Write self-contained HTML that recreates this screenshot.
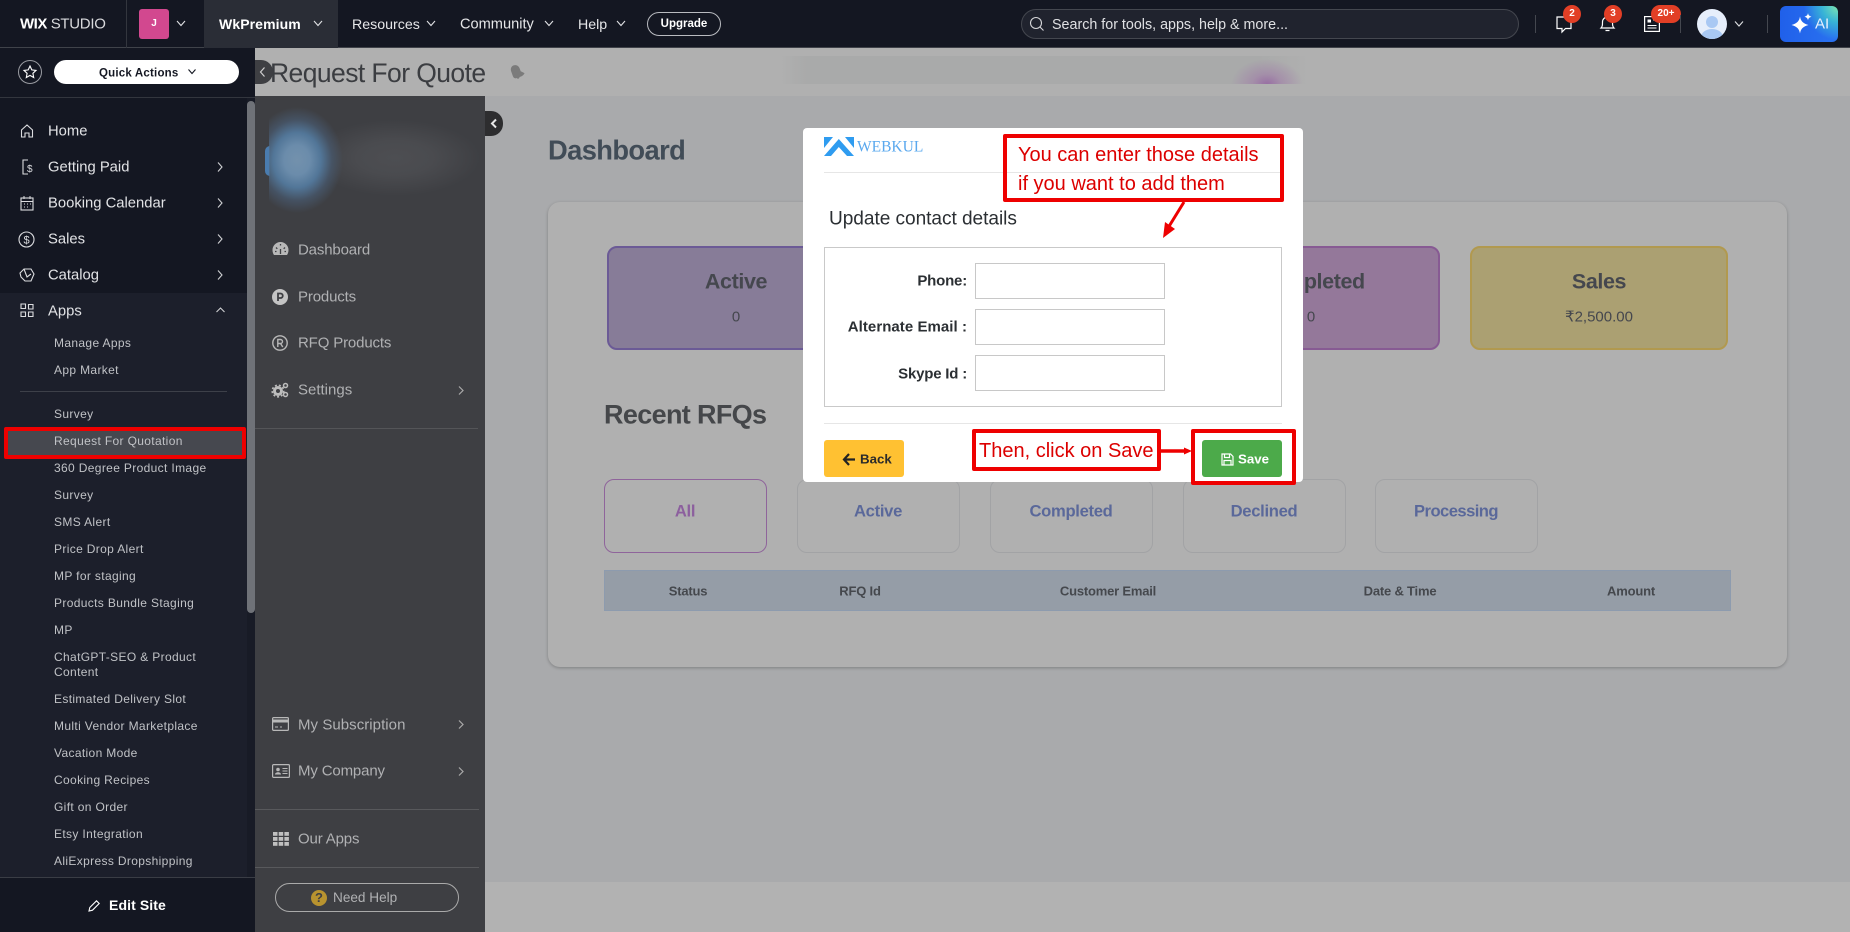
<!DOCTYPE html>
<html><head><meta charset="utf-8"><title>Request For Quote</title>
<style>
html,body{margin:0;padding:0;width:1850px;height:932px;overflow:hidden;background:#a9aaac;font-family:"Liberation Sans",sans-serif}
div,span{box-sizing:border-box}
.a{position:absolute}
.t{position:absolute;white-space:nowrap;line-height:1;transform:translateY(-50%)}
.c{transform:translate(-50%,-50%)}
svg{position:absolute;overflow:visible}
.n{color:#e2e3e6;font-size:14.8px;margin-top:1px}
.s{color:#c0c2c6;font-size:12px;letter-spacing:.35px;left:54px}
.r{color:#b0b1b3;font-size:15px;left:298px;letter-spacing:-.15px}
.w{color:#fff}
.bd{position:absolute;background:#e23f26;border-radius:10px;color:#fff;font-size:10px;font-weight:bold;text-align:center;height:18px;line-height:18px}
.stat{position:absolute;top:246px;height:104px;width:258px;border-radius:10px;border:2px solid}
.tab{position:absolute;top:479px;height:74px;width:163px;border:1px solid #a2a3a5;border-radius:10px}
.tt{font-size:16.6px;font-weight:bold;color:#5a689a;letter-spacing:-.3px;top:512px}
.th{color:#45484d;font-size:13px;font-weight:bold;top:591px;letter-spacing:-.2px}
.lb{color:#2b2f33;font-size:15px;font-weight:bold;right:883px;letter-spacing:-.2px}
.inp{position:absolute;left:975px;width:190px;height:36px;border:1px solid #c8c8c8;background:#fff}
.rb{position:absolute;border:4px solid #ee0000;border-radius:2px}
</style></head><body>

<!-- content area -->
<div class="a" style="left:255px;top:48px;width:1595px;height:48px;background:#b0b0b0"></div>
<div class="a" style="left:485px;top:882px;width:1365px;height:50px;background:#b2b2b2"></div>
<div class="a" style="left:780px;top:56px;width:530px;height:28px;background:linear-gradient(90deg,rgba(168,169,169,0),#a9aaaa 5%,#a9aaaa 90%,rgba(168,169,169,0))"></div>
<div class="a" style="left:1225px;top:58px;width:80px;height:26px;background:radial-gradient(ellipse 36px 25px at 42px 26px,#986fa3 0%,rgba(160,125,168,.6) 40%,rgba(176,160,180,0) 100%)"></div>
<div class="t" style="left:270px;top:73px;font-size:26.5px;color:#3b3d41;letter-spacing:-.58px">Request For Quote</div>
<svg style="left:507px;top:64px" width="18" height="18" viewBox="0 0 18 18"><path d="M9 1c3 0 5 2 5 5v3l3 3c-2 2-4 2-6 2-1 2-3 1-3 0-2 0-3-1-3-3V6c0-3 2-5 4-5z" fill="#7b7b7b" transform="rotate(-20 9 9)"/></svg>

<!-- dashboard card -->
<div class="t" style="left:548px;top:150px;font-size:27.3px;font-weight:bold;color:#414c57;letter-spacing:-.6px">Dashboard</div>
<div class="a" style="left:548px;top:202px;width:1239px;height:465px;background:#b0b0b0;border-radius:12px;box-shadow:0 1px 3px rgba(0,0,0,.25)"></div>
<div class="stat" style="left:607px;background:#877c98;border-color:#6b5a96"></div>
<div class="t c" style="left:736px;top:282px;font-size:21.5px;font-weight:bold;color:#45474e;letter-spacing:-.4px">Active</div>
<div class="t c" style="left:736px;top:317px;font-size:15px;color:#45474e">0</div>
<div class="stat" style="left:1182px;background:#94789a;border-color:#875a93"></div>
<div class="t c" style="left:1311px;top:282px;font-size:21.5px;font-weight:bold;color:#45474e;letter-spacing:-.4px">Completed</div>
<div class="t c" style="left:1311px;top:317px;font-size:15px;color:#45474e">0</div>
<div class="stat" style="left:1470px;background:#aba072;border-color:#b1994f"></div>
<div class="t c" style="left:1599px;top:282px;font-size:21.5px;font-weight:bold;color:#45474e;letter-spacing:-.4px">Sales</div>
<div class="t c" style="left:1599px;top:317px;font-size:15px;color:#45474e;font-family:'Liberation Sans','DejaVu Sans',sans-serif">₹2,500.00</div>

<div class="t" style="left:604px;top:415px;font-size:27px;font-weight:bold;color:#45474a;letter-spacing:-.65px">Recent RFQs</div>
<div class="tab" style="left:604px;border-color:#8f649b"></div>
<div class="t c tt" style="left:685px;color:#8c5f9e">All</div>
<div class="tab" style="left:797px"></div>
<div class="t c tt" style="left:878px">Active</div>
<div class="tab" style="left:990px"></div>
<div class="t c tt" style="left:1071px">Completed</div>
<div class="tab" style="left:1183px"></div>
<div class="t c tt" style="left:1264px">Declined</div>
<div class="tab" style="left:1375px"></div>
<div class="t c tt" style="left:1456px;letter-spacing:-.55px">Processing</div>
<div class="a" style="left:604px;top:570px;width:1127px;height:41px;background:#959da7;border:1px solid #8d9bae"></div>
<div class="t c th" style="left:688px">Status</div>
<div class="t c th" style="left:860px">RFQ Id</div>
<div class="t c th" style="left:1108px">Customer Email</div>
<div class="t c th" style="left:1400px">Date &amp; Time</div>
<div class="t c th" style="left:1631px">Amount</div>

<!-- rfq sidebar -->
<div class="a" style="left:255px;top:96px;width:230px;height:836px;background:#3e3f43"></div>
<div class="a" style="left:310px;top:110px;width:175px;height:100px;background:radial-gradient(ellipse 85px 38px at 85px 48px,#4d4e52 0%,#4a4b4f 45%,rgba(62,63,67,0) 100%)"></div>
<div class="a" style="left:265px;top:146px;width:5px;height:30px;background:#4a7caf;border-radius:15px 0 0 15px/15px 0 0 15px"></div>
<div class="a" style="left:269px;top:106px;width:86px;height:108px;background:radial-gradient(ellipse 46px 53px at 28px 54px,#7391ac 0%,#6b8cab 28%,#527698 52%,rgba(72,90,112,.7) 76%,rgba(62,63,67,0) 100%)"></div>
<div class="a" style="left:485px;top:111px;width:18px;height:25px;background:#2d2d2f;border-radius:0 12px 12px 0"></div>
<svg style="left:489px;top:118px" width="10" height="11" viewBox="0 0 10 11"><path d="M7 1.500 3 5.500 7 9.500" fill="none" stroke="#e8e8e8" stroke-width="2"/></svg>
<div class="a" style="left:255px;top:60px;width:18px;height:24px;background:#3e3f43;border-radius:0 12px 12px 0"></div>
<svg style="left:258px;top:66px" width="10" height="12" viewBox="0 0 10 12"><path d="M6.500 1.500 2.500 6 6.500 10.500" fill="none" stroke="#d0d0d0" stroke-width="1.200"/></svg>

<svg style="left:272px;top:241px" width="17" height="16" viewBox="0 0 17 16"><path d="M8.500 1A8 8 0 0 0 .5 9c0 2 .6 3.700 1.500 5h13c.9-1.300 1.500-3 1.500-5a8 8 0 0 0-8-8z" fill="#b8b8b8"/><path d="M8.500 13V8M4 6.500l1.300 1.300M13 6.500l-1.300 1.300M3 10.500h1.500M14 10.500h-1.500M8.500 3v1.500" stroke="#3e3f43" stroke-width="1.300"/></svg>
<div class="t r" style="top:250px">Dashboard</div>
<svg style="left:272px;top:289px" width="16" height="16" viewBox="0 0 16 16"><circle cx="8" cy="8" r="8" fill="#c4c4c4"/><path d="M6 12V4.500h2.500a2.100 2.100 0 0 1 0 4.500H6" fill="none" stroke="#3e3f43" stroke-width="1.800"/></svg>
<div class="t r" style="top:297px">Products</div>
<svg style="left:272px;top:335px" width="16" height="16" viewBox="0 0 16 16"><circle cx="8" cy="8" r="7.200" fill="none" stroke="#b8b8b8" stroke-width="1.400"/><path d="M5.800 12V4.500h2.700a2 2 0 0 1 0 4H5.800M8.500 8.500 10.800 12" fill="none" stroke="#b8b8b8" stroke-width="1.400"/></svg>
<div class="t r" style="top:343px">RFQ Products</div>
<svg style="left:272px;top:382px" width="17" height="16" viewBox="0 0 17 16"><circle cx="6" cy="9" r="3.500" fill="none" stroke="#bcbcbc" stroke-width="3"/><circle cx="6" cy="9" r="5.800" fill="none" stroke="#bcbcbc" stroke-width="1.600" stroke-dasharray="2 2"/><circle cx="13.500" cy="3.500" r="2" fill="none" stroke="#bcbcbc" stroke-width="1.500"/><circle cx="13.500" cy="12.500" r="2" fill="none" stroke="#bcbcbc" stroke-width="1.500"/></svg>
<div class="t r" style="top:390px;letter-spacing:0">Settings</div>
<svg style="left:457px;top:385px" width="8" height="11" viewBox="0 0 8 11"><path d="M2 1.500 6 5.500 2 9.500" fill="none" stroke="#aaa" stroke-width="1.200"/></svg>
<div class="a" style="left:255px;top:428px;width:223px;height:1px;background:#545558"></div>
<svg style="left:272px;top:717px" width="17" height="14" viewBox="0 0 17 14"><rect x=".6" y=".6" width="15.800" height="12.800" rx="1" fill="none" stroke="#b8b8b8" stroke-width="1.200"/><rect x=".6" y="2.500" width="15.800" height="3" fill="#b8b8b8"/><path d="M3 10h3M8 10h2" stroke="#b8b8b8"/></svg>
<div class="t r" style="top:725px;letter-spacing:.05px">My Subscription</div>
<svg style="left:457px;top:719px" width="8" height="11" viewBox="0 0 8 11"><path d="M2 1.500 6 5.500 2 9.500" fill="none" stroke="#aaa" stroke-width="1.200"/></svg>
<svg style="left:272px;top:764px" width="18" height="14" viewBox="0 0 18 14"><rect x=".6" y=".6" width="16.800" height="12.800" rx="1" fill="none" stroke="#b8b8b8" stroke-width="1.200"/><circle cx="6" cy="5.500" r="1.800" fill="#b8b8b8"/><path d="M3 10.500c0-3 6-3 6 0z" fill="#b8b8b8"/><path d="M10.500 4.500h5M10.500 7h5M10.500 9.500h5" stroke="#b8b8b8"/></svg>
<div class="t r" style="top:771px">My Company</div>
<svg style="left:457px;top:766px" width="8" height="11" viewBox="0 0 8 11"><path d="M2 1.500 6 5.500 2 9.500" fill="none" stroke="#aaa" stroke-width="1.200"/></svg>
<div class="a" style="left:255px;top:809px;width:224px;height:1px;background:#58595c"></div>
<svg style="left:273px;top:832px" width="16" height="14" viewBox="0 0 16 14" fill="#c0c0c0"><rect width="4.500" height="3.800"/><rect x="5.700" width="4.500" height="3.800"/><rect x="11.400" width="4.500" height="3.800"/><rect y="5" width="4.500" height="3.800"/><rect x="5.700" y="5" width="4.500" height="3.800"/><rect x="11.400" y="5" width="4.500" height="3.800"/><rect y="10" width="4.500" height="3.800"/><rect x="5.700" y="10" width="4.500" height="3.800"/><rect x="11.400" y="10" width="4.500" height="3.800"/></svg>
<div class="t r" style="top:839px">Our Apps</div>
<div class="a" style="left:255px;top:867px;width:224px;height:1px;background:#58595c"></div>
<div class="a" style="left:275px;top:883px;width:184px;height:29px;border:1px solid #aaa;border-radius:15px"></div>
<div class="a" style="left:311px;top:890px;width:16px;height:16px;border-radius:50%;background:#b8932f;color:#3e3f43;font-size:13px;font-weight:bold;text-align:center;line-height:16px">?</div>
<div class="t" style="left:333px;top:898px;font-size:13.600px;color:#b0b1b3">Need Help</div>

<!-- left sidebar -->
<div class="a" style="left:0;top:48px;width:255px;height:884px;background:#141722"></div>
<div class="a" style="left:0;top:97px;width:255px;height:1px;background:#33363e"></div>
<div class="a" style="left:0;top:293px;width:247px;height:584px;background:#1c1f2b"></div>
<div class="a" style="left:247px;top:98px;width:8px;height:779px;background:#181b26"></div>
<div class="a" style="left:247px;top:101px;width:8px;height:512px;background:#6f7278;border-radius:4px"></div>
<svg style="left:18px;top:60px" width="24" height="24" viewBox="0 0 24 24"><circle cx="12" cy="12" r="11.500" fill="none" stroke="#9a9ca2"/><path d="M12 6l1.800 3.900 4.200.5-3.100 2.900.8 4.200-3.700-2.100-3.700 2.100.8-4.200L6 10.400l4.200-.5z" fill="none" stroke="#fff" stroke-width="1.100"/></svg>
<div class="a" style="left:54px;top:60px;width:185px;height:24px;border-radius:12px;background:#fff"></div>
<div class="t" style="left:99px;top:74px;font-size:11.500px;font-weight:bold;color:#141722;letter-spacing:.2px">Quick Actions</div>
<svg style="left:187px;top:68px" width="10" height="8" viewBox="0 0 10 8"><path d="M1.500 1.500 5 5.500l3.500-4" fill="none" stroke="#141722" stroke-width="1.100"/></svg>

<svg style="left:19px;top:123px" width="16" height="16" viewBox="0 0 16 16"><path d="M2.500 14V7L8 2l5.500 5v7h-3.500v-4H6v4z" fill="none" stroke="#dcdde0" stroke-width="1.100"/></svg>
<div class="t n" style="left:48px;top:131px">Home</div>
<svg style="left:20px;top:159px" width="16" height="16" viewBox="0 0 16 16"><path d="M8 1H3v14h5" fill="none" stroke="#dcdde0" stroke-width="1.100"/><text x="7" y="13" font-size="10" fill="#dcdde0" font-family="Liberation Sans">$</text></svg>
<div class="t n" style="left:48px;top:167px">Getting Paid</div>
<svg style="left:19px;top:195px" width="16" height="16" viewBox="0 0 16 16"><rect x="2" y="3" width="12" height="12" fill="none" stroke="#dcdde0" stroke-width="1.100"/><path d="M2 6.500h12M5 1v3M11 1v3M5 9h1M8 9h1M11 9h1M5 12h1M8 12h1" stroke="#dcdde0"/></svg>
<div class="t n" style="left:48px;top:203px">Booking Calendar</div>
<svg style="left:18px;top:231px" width="17" height="17" viewBox="0 0 17 17"><circle cx="8.500" cy="8.500" r="7.500" fill="none" stroke="#dcdde0" stroke-width="1.100"/><text x="8.500" y="12.500" font-size="11" text-anchor="middle" fill="#dcdde0" font-family="Liberation Sans">$</text></svg>
<div class="t n" style="left:48px;top:239px">Sales</div>
<svg style="left:19px;top:267px" width="16" height="16" viewBox="0 0 16 16"><path d="M5 2h7l3 5-3 7H6L2 10 1 6z M5 2l3 8 4-3" fill="none" stroke="#dcdde0" stroke-width="1.100"/></svg>
<div class="t n" style="left:48px;top:275px">Catalog</div>
<svg style="left:20px;top:303px" width="14" height="15" viewBox="0 0 14 15"><path d="M1 1h4.500v4.500H1zM1 9h4.500v4.500H1zM8.500 9H13v4.500H8.500zM8.500 1.500H13V6H8.500z" fill="none" stroke="#dcdde0" stroke-width="1.100"/></svg>
<div class="t n" style="left:48px;top:311px">Apps</div>
<svg style="left:216px;top:161px" width="8" height="12" viewBox="0 0 8 12"><path d="M2 1.500 6 6 2 10.500" fill="none" stroke="#cfd0d3" stroke-width="1.100"/></svg>
<svg style="left:216px;top:197px" width="8" height="12" viewBox="0 0 8 12"><path d="M2 1.500 6 6 2 10.500" fill="none" stroke="#cfd0d3" stroke-width="1.100"/></svg>
<svg style="left:216px;top:233px" width="8" height="12" viewBox="0 0 8 12"><path d="M2 1.500 6 6 2 10.500" fill="none" stroke="#cfd0d3" stroke-width="1.100"/></svg>
<svg style="left:216px;top:269px" width="8" height="12" viewBox="0 0 8 12"><path d="M2 1.500 6 6 2 10.500" fill="none" stroke="#cfd0d3" stroke-width="1.100"/></svg>
<svg style="left:215px;top:306px" width="11" height="8" viewBox="0 0 11 8"><path d="M1.500 6 5.500 2l4 4" fill="none" stroke="#cfd0d3" stroke-width="1.100"/></svg>

<div class="t s" style="top:343px">Manage Apps</div>
<div class="t s" style="top:370px">App Market</div>
<div class="a" style="left:20px;top:391px;width:207px;height:1px;background:#3d4049"></div>
<div class="t s" style="top:414px">Survey</div>
<div class="a" style="left:7px;top:430px;width:236px;height:25px;background:#46484f"></div>
<div class="t s" style="top:441px">Request For Quotation</div>
<div class="t s" style="top:468px">360 Degree Product Image</div>
<div class="t s" style="top:495px">Survey</div>
<div class="t s" style="top:522px">SMS Alert</div>
<div class="t s" style="top:549px">Price Drop Alert</div>
<div class="t s" style="top:576px">MP for staging</div>
<div class="t s" style="top:603px">Products Bundle Staging</div>
<div class="t s" style="top:630px">MP</div>
<div class="t s" style="top:657px">ChatGPT-SEO &amp; Product</div>
<div class="t s" style="top:672px">Content</div>
<div class="t s" style="top:699px">Estimated Delivery Slot</div>
<div class="t s" style="top:726px">Multi Vendor Marketplace</div>
<div class="t s" style="top:753px">Vacation Mode</div>
<div class="t s" style="top:780px">Cooking Recipes</div>
<div class="t s" style="top:807px">Gift on Order</div>
<div class="t s" style="top:834px">Etsy Integration</div>
<div class="t s" style="top:861px">AliExpress Dropshipping</div>
<div class="a" style="left:4px;top:427px;width:242px;height:32px;border:4px solid #ee0000;border-radius:2px"></div>
<div class="a" style="left:0;top:877px;width:255px;height:55px;background:#141722;border-top:1px solid #3a3d45"></div>
<svg style="left:88px;top:899px" width="13" height="13" viewBox="0 0 13 13"><path d="M1 12l.8-3.500L8.500 1.800l2.700 2.700-6.700 6.700z" fill="none" stroke="#fff" stroke-width="1.100"/></svg>
<div class="t w" style="left:109px;top:905px;font-size:14px;font-weight:bold;letter-spacing:.1px">Edit Site</div>

<!-- header -->
<div class="a" style="left:0;top:0;width:1850px;height:48px;background:#141722;border-bottom:1px solid #40434a"></div>
<div class="t w" style="left:20px;top:24px;font-size:15px;font-weight:bold;letter-spacing:-.5px">WIX<span style="font-weight:normal;letter-spacing:-.3px;color:#d8d9dc"> STUDIO</span></div>
<div class="a" style="left:126px;top:0;width:1px;height:48px;background:#33363e"></div>
<div class="a" style="left:139px;top:9px;width:30px;height:30px;background:#d2488f;border-radius:3px;color:#fff;font-size:10px;font-weight:bold;text-align:center;line-height:30px">J</div>
<div class="a" style="left:204px;top:0;width:134px;height:48px;background:#2a2d36"></div>
<div class="t w" style="left:219px;top:24px;font-size:14px;font-weight:bold;letter-spacing:.1px">WkPremium</div>
<div class="t" style="left:352px;top:25px;font-size:14.200px;color:#e6e7e9">Resources</div>
<div class="t" style="left:460px;top:25px;font-size:14.600px;color:#e6e7e9">Community</div>
<div class="t" style="left:578px;top:25px;font-size:14.200px;color:#e6e7e9">Help</div>
<svg style="left:0;top:0" width="700" height="48" fill="none" stroke="#dfe0e3" stroke-width="1.100"><path d="M177 21l4 4.500 4-4.500M314 21l4 4.500 4-4.500M427 21l4 4.500 4-4.500M545 21l4 4.500 4-4.500M617 21l4 4.500 4-4.500"/></svg>
<div class="a" style="left:647px;top:12px;width:74px;height:24px;border:1px solid #b9bbc0;border-radius:12px;color:#fff;font-size:11.500px;font-weight:bold;text-align:center;line-height:23px">Upgrade</div>

<div class="a" style="left:1021px;top:9px;width:498px;height:30px;background:#20232e;border:1px solid #44474f;border-radius:15px"></div>
<svg style="left:1029px;top:16px" width="16" height="16" viewBox="0 0 16 16"><circle cx="7" cy="7" r="5.500" fill="none" stroke="#d5d6d9" stroke-width="1.100"/><path d="M11 11l3.500 3.500" stroke="#d5d6d9" stroke-width="1.100"/></svg>
<div class="t" style="left:1052px;top:25px;font-size:14.300px;color:#dfe0e3">Search for tools, apps, help &amp; more...</div>
<div class="a" style="left:1535px;top:15px;width:1px;height:18px;background:#44474f"></div>
<svg style="left:1556px;top:16px" width="17" height="17" viewBox="0 0 17 17"><path d="M1 1h14v11.500H9.500L6 16v-3.500H1z" fill="none" stroke="#fff" stroke-width="1.200"/></svg>
<div class="bd" style="left:1563px;top:5px;width:18px">2</div>
<svg style="left:1599px;top:15px" width="17" height="18" viewBox="0 0 17 18"><path d="M2 13c1.500-1.500 1.500-3 1.500-6a5 5 0 0 1 10 0c0 3 0 4.500 1.500 6zM6.500 15.500h4" fill="none" stroke="#fff" stroke-width="1.200"/></svg>
<div class="bd" style="left:1604px;top:5px;width:18px">3</div>
<svg style="left:1644px;top:16px" width="16" height="16" viewBox="0 0 16 16"><rect x=".6" y=".6" width="14.800" height="14.800" fill="none" stroke="#fff" stroke-width="1.200"/><rect x="3.500" y="3.500" width="3.500" height="3" fill="#fff"/><path d="M3.500 9.500h9M3.500 12h9M9 4h3.500" stroke="#fff"/></svg>
<div class="bd" style="left:1651px;top:5px;width:30px">20+</div>
<div class="a" style="left:1680px;top:15px;width:1px;height:18px;background:#44474f"></div>
<div class="a" style="left:1697px;top:9px;width:30px;height:30px;border-radius:50%;background:#e6eefb;overflow:hidden">
  <div class="a" style="left:9px;top:7px;width:12px;height:12px;border-radius:50%;background:#a9c8f3"></div>
  <div class="a" style="left:4px;top:20px;width:22px;height:16px;border-radius:50%;background:#a9c8f3"></div>
</div>
<svg style="left:1734px;top:20px" width="10" height="8" viewBox="0 0 10 8"><path d="M1 1.500l4 4.500 4-4.500" fill="none" stroke="#dfe0e3" stroke-width="1.100"/></svg>
<div class="a" style="left:1767px;top:15px;width:1px;height:18px;background:#44474f"></div>
<div class="a" style="left:1780px;top:6px;width:58px;height:36px;border-radius:6px;background:radial-gradient(circle at 100% 0%,#7fe6b0 0,#38b4d6 16px,rgba(42,112,240,0) 34px),linear-gradient(90deg,#2060ea,#2a72f0)"></div>
<svg style="left:1790px;top:12px" width="26" height="24" viewBox="0 0 26 24" fill="#fff"><path d="M10 4.500c.8 4.700 2.800 6.800 8.500 8.500-5.700 1.700-7.700 3.800-8.500 8.500-.8-4.700-2.800-6.800-8.500-8.500 5.700-1.700 7.700-3.800 8.500-8.500z"/><path d="M18 1c.4 2.200 1.200 3 3.500 3.700-2.300.7-3.100 1.500-3.500 3.700-.4-2.200-1.200-3-3.500-3.700 2.300-.7 3.100-1.500 3.500-3.700z"/></svg>
<div class="t" style="left:1815px;top:24px;font-size:15px;color:#e8f0ff">AI</div>

<!-- modal -->
<div class="a" style="left:803px;top:128px;width:500px;height:354px;background:#fff;border-radius:4px"></div>
<svg style="left:824px;top:137px" width="30" height="20" viewBox="0 0 30 20" fill="#2f9cf0"><path d="M0 0h9L0 11zM30 0h-9l9 11zM0 19 14.800 2 30 19h-7L14.800 10 7 19z"/></svg>
<div class="t" style="left:857px;top:147px;font-family:'Liberation Serif',serif;font-size:15.500px;color:#5aa8ee">WEBKUL</div>
<div class="a" style="left:824px;top:172px;width:458px;height:1px;background:#e6e6e6"></div>
<div class="t" style="left:829px;top:219px;font-size:19.100px;color:#2b2f33;letter-spacing:-.05px">Update contact details</div>
<div class="a" style="left:824px;top:247px;width:458px;height:160px;border:1px solid #c9c9c9"></div>
<div class="t lb" style="top:281px">Phone:</div>
<div class="inp" style="top:263px"></div>
<div class="t lb" style="top:327px;letter-spacing:.05px">Alternate Email :</div>
<div class="inp" style="top:309px"></div>
<div class="t lb" style="top:373.500px">Skype Id :</div>
<div class="inp" style="top:355px"></div>
<div class="a" style="left:824px;top:423px;width:458px;height:1px;background:#e6e6e6"></div>
<div class="a" style="left:824px;top:440px;width:80px;height:37px;background:#ffc132;border-radius:3px"></div>
<svg style="left:843px;top:453px" width="12" height="13" viewBox="0 0 12 13"><path d="M6 1 1 6.500 6 12M1.500 6.500H12" fill="none" stroke="#222" stroke-width="2.200"/></svg>
<div class="t" style="left:860px;top:459px;font-size:13.300px;font-weight:bold;color:#2b2b2b">Back</div>
<div class="a" style="left:1202px;top:440px;width:80px;height:37px;background:#4caa4a;border-radius:3px"></div>
<svg style="left:1221px;top:453px" width="13" height="13" viewBox="0 0 13 13"><path d="M1 1h8.500L12 3.500V12H1zM3.500 1v3.500h5V1M3 12V7.500h7V12" fill="none" stroke="#fff" stroke-width="1.200"/></svg>
<div class="t w" style="left:1238px;top:459px;font-size:13.300px;font-weight:bold">Save</div>

<!-- annotations -->
<div class="rb" style="left:1003px;top:134px;width:281px;height:68px"></div>
<div class="t" style="left:1018px;top:155px;font-size:20px;color:#dc0000">You can enter those details</div>
<div class="t" style="left:1018px;top:184px;font-size:20px;color:#dc0000">if you want to add them</div>
<svg style="left:0;top:0" width="1850" height="932"><path d="M1184 202 1168 228" stroke="#ee0000" stroke-width="3"/><path d="M1163 238 1165 222 1175 229z" fill="#ee0000"/><path d="M1161 451h24" stroke="#ee0000" stroke-width="3.500"/><path d="M1192 451l-8-3.500v7z" fill="#ee0000"/></svg>
<div class="rb" style="left:972px;top:429px;width:189px;height:42px"></div>
<div class="t" style="left:979px;top:451px;font-size:20px;color:#dc0000">Then, click on Save</div>
<div class="rb" style="left:1191px;top:429px;width:105px;height:56px"></div>
</body></html>
